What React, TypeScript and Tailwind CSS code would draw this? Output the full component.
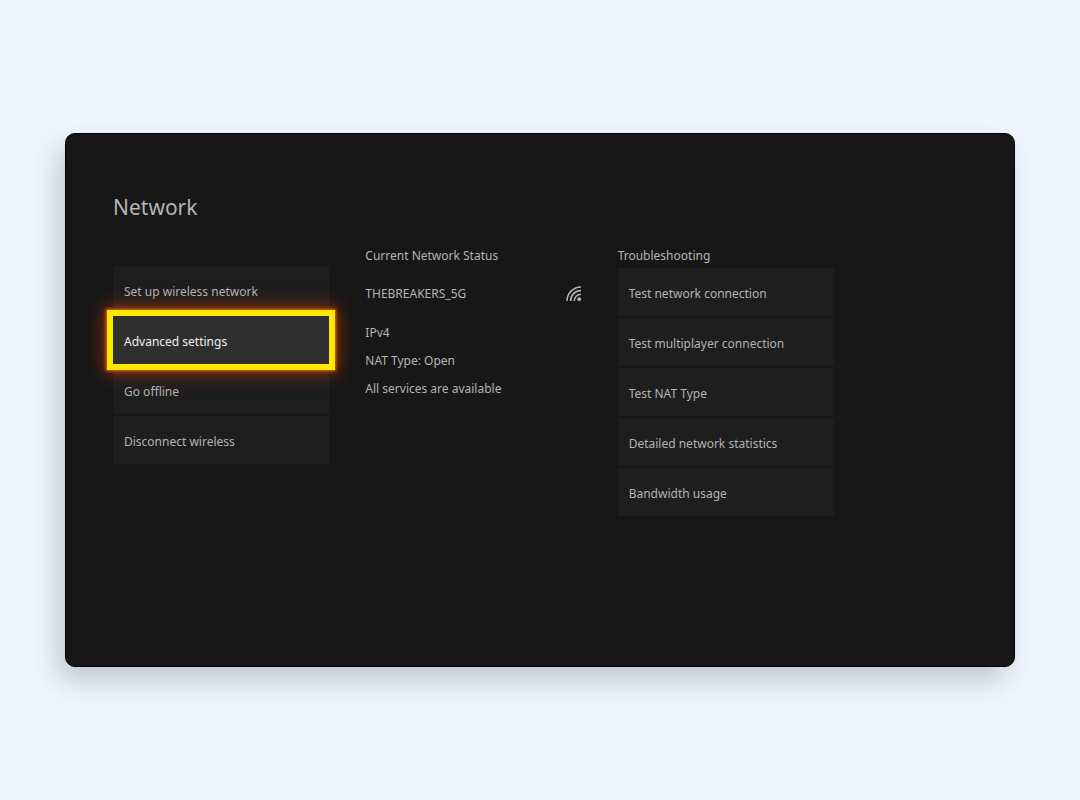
import { useState } from "react";

const networkActions = [
  "Set up wireless network",
  "Advanced settings",
  "Go offline",
  "Disconnect wireless",
];

const troubleshootingActions = [
  "Test network connection",
  "Test multiplayer connection",
  "Test NAT Type",
  "Detailed network statistics",
  "Bandwidth usage",
];

export default function App() {
  const [selected, setSelected] = useState("Advanced settings");

  return (
    <div className="flex min-h-screen items-center bg-[#f0f5ff] px-[65px] font-['Noto_Sans',sans-serif] text-xs leading-5 text-[#b4b4b4]">
      <main className="w-full rounded-[10px] border border-black bg-[#171717] pt-[57px] pr-[180px] pb-[150px] pl-[47px] shadow-[-8px_14px_28px_rgba(0,0,0,0.19)]">
        <h1 className="text-[21px] leading-8">Network</h1>

        <div className="mt-[23px] grid grid-cols-3 gap-9">
          <div className="pt-5">
            <ActionList
              items={networkActions}
              selected={selected}
              onSelect={setSelected}
            />
          </div>

          <NetworkStatus />

          <section>
            <h2 className="mb-[2px]">Troubleshooting</h2>
            <ActionList
              items={troubleshootingActions}
              selected={selected}
              onSelect={setSelected}
            />
          </section>
        </div>
      </main>
    </div>
  );
}

function ActionList({
  items,
  selected,
  onSelect,
}: {
  items: string[];
  selected: string;
  onSelect: (item: string) => void;
}) {
  return (
    <ul className="flex flex-col gap-[2px]">
      {items.map((item) => (
        <li key={item}>
          <button
            type="button"
            onClick={() => onSelect(item)}
            className={`block h-12 w-full px-[11px] pt-1 text-left whitespace-nowrap ${
              selected === item
                ? "relative z-10 bg-[#2f2f2f] text-[#f0f0f0] shadow-[0_0_0_6px_#ffe900,0_0_3px_7px_#e86a00,0_0_16px_8px_rgba(220,60,0,0.7)]"
                : "bg-[#1e1e1e]"
            }`}
          >
            {item}
          </button>
        </li>
      ))}
    </ul>
  );
}

function NetworkStatus() {
  return (
    <section>
      <h2>Current Network Status</h2>
      <div className="mt-[18px] flex items-center justify-between">
        <span>THEBREAKERS_5G</span>
        <WifiIcon />
      </div>
      <div className="mt-[19px] space-y-2">
        <p>IPv4</p>
        <p>NAT Type: Open</p>
        <p>All services are available</p>
      </div>
    </section>
  );
}

// Quarter-circle signal arcs fanning out from the bottom right
function WifiIcon() {
  return (
    <svg
      width="16"
      height="16"
      viewBox="0 0 16 16"
      fill="none"
      stroke="currentColor"
      strokeWidth="1.5"
      aria-hidden="true"
    >
      <path d="M1 15A14 14 0 0 1 15 1" />
      <path d="M4.6 15A10.4 10.4 0 0 1 15 4.6" />
      <path d="M8.2 15A6.8 6.8 0 0 1 15 8.2" />
      <circle cx="13.2" cy="13.2" r="1.9" fill="currentColor" stroke="none" />
    </svg>
  );
}
